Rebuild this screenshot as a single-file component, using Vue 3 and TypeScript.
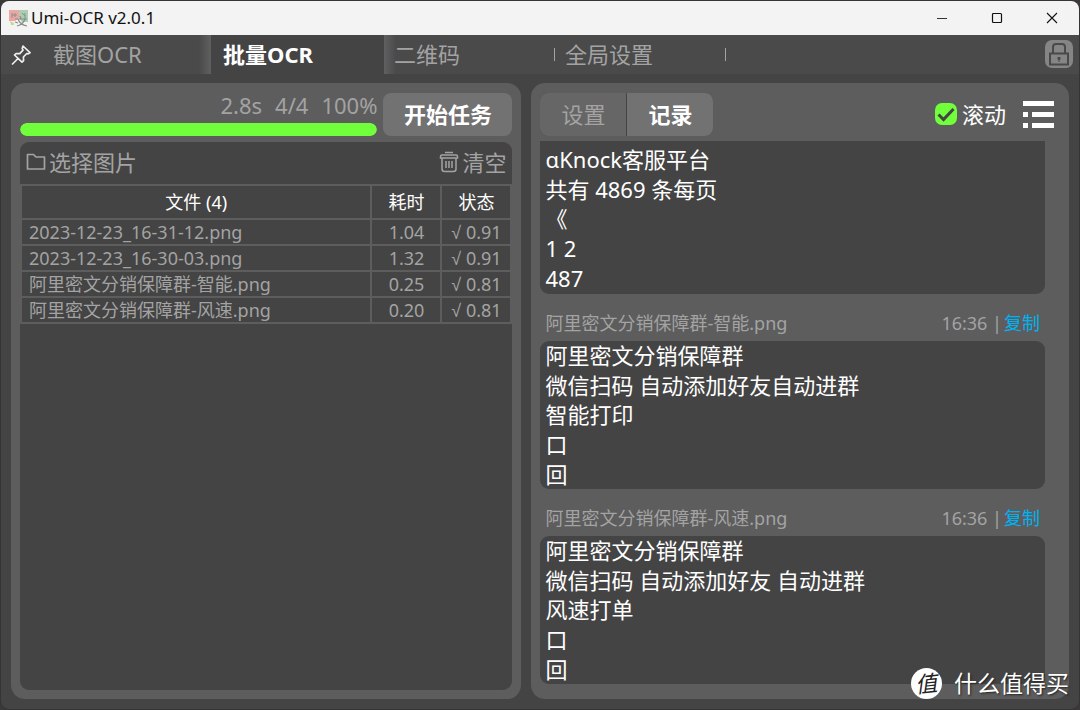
<script setup lang="ts">
import { ref } from 'vue'

interface FileRow { name: string; time: string; score: string }
interface OcrRecord { id: number; name: string; at: string; lines: string[]; cut: boolean }

const files: FileRow[] = [
  { name: '2023-12-23_16-31-12.png', time: '1.04', score: '0.91' },
  { name: '2023-12-23_16-30-03.png', time: '1.32', score: '0.91' },
  { name: '阿里密文分销保障群-智能.png', time: '0.25', score: '0.81' },
  { name: '阿里密文分销保障群-风速.png', time: '0.20', score: '0.81' },
]

const records: OcrRecord[] = [
  { id: 1, name: '', at: '', cut: true, lines: ['αKnock客服平台', '共有 4869 条每页', '《', '1 2', '487'] },
  { id: 2, name: '阿里密文分销保障群-智能.png', at: '16:36', cut: false, lines: ['阿里密文分销保障群', '微信扫码 自动添加好友自动进群', '智能打印', '口', '回'] },
  { id: 3, name: '阿里密文分销保障群-风速.png', at: '16:36', cut: false, lines: ['阿里密文分销保障群', '微信扫码 自动添加好友 自动进群', '风速打单', '口', '回'] },
]

const progress = ref(100)
const autoScroll = ref(true)
</script>

<template>
  <div class="window">
    <header class="titlebar">
      <svg class="logo" viewBox="0 0 20 18" aria-hidden="true">
        <path d="M0 1h10v8l-4 3H0z" fill="#eda6a2" />
        <path d="M10 1h9v12h-6l-3-4z" fill="#a9cfb0" />
        <path d="M1 12l4 2v2H2z" fill="#b9e08f" />
        <path d="M3 4v5M6 4v4M3 6h5M13 4l3 3M16 4v6" stroke="#8d8f8d" stroke-width="1" fill="none" />
        <path d="M6 10h12M11 7l1 3M16 10c-1 3-4 6-8 7M9 10c1 3 4 6 9 7M6 13l3 1" stroke="#8b8c8a" stroke-width="1.2" fill="none" />
      </svg>
      <h1>Umi-OCR v2.0.1</h1>
      <div class="sys">
        <button aria-label="最小化"><svg viewBox="0 0 12 12"><path d="M1 6.5h10" stroke="#333" /></svg></button>
        <button aria-label="最大化"><svg viewBox="0 0 12 12"><rect x="1.5" y="1.5" width="9" height="9" rx="1" fill="none" stroke="#111" stroke-width="1.2" /></svg></button>
        <button aria-label="关闭"><svg viewBox="0 0 12 12"><path d="M1 1l10 10M11 1L1 11" stroke="#111" stroke-width="1.1" /></svg></button>
      </div>
    </header>

    <nav class="tabs">
      <button class="pin" aria-label="置顶">
        <svg viewBox="0 0 20 20"><path d="M12 1l7 6.700-1.800 1.200-1.400-.4-3.400 3.500.2 3.600-1.600 1.600L3.500 10l1.600-1.500 3.700.1 3.200-3.400-.8-1.700zM7 13.500L1.500 19" fill="none" stroke="#eee" stroke-width="1.700" stroke-linejoin="round" stroke-linecap="round" /></svg>
      </button>
      <button class="tab first">截图OCR</button>
      <button class="tab active">批量OCR</button>
      <button class="tab after">二维码</button>
      <button class="tab last">全局设置</button>
      <button class="lock" aria-label="锁定">
        <svg viewBox="0 0 28 28"><path d="M8 13V7q0-3 3-3h6q3 0 3 3v6" fill="none" stroke="#494949" stroke-width="2" /><rect x="5" y="13.500" width="18" height="11" fill="none" stroke="#494949" stroke-width="2" /><path d="M12.500 17h3v2.500l-1 .5v2h-1v-2l-1-.5z" fill="#494949" /></svg>
      </button>
    </nav>

    <main class="content">
      <section class="panel left">
        <div class="task">
          <div class="status">
            <div class="figures"><span>2.8s</span><span>4/4</span><span>{{ progress }}%</span></div>
            <div class="track"><div class="fill" :style="{ width: progress + '%' }"></div></div>
          </div>
          <button class="start">开始任务</button>
        </div>
        <div class="filebox">
          <div class="filebar">
            <button>
              <svg class="folder" viewBox="0 0 20 18"><path d="M1.500 1.500h6l2.500 2.500h8.500v12h-17z" fill="none" stroke="#a3a3a3" stroke-width="1.700" stroke-linejoin="round" /></svg>选择图片
            </button>
            <button>
              <svg class="trash" viewBox="0 0 20 22"><g fill="none" stroke="#a3a3a3" stroke-width="1.500"><path d="M6 1.500h8M1.500 7V5.500q0-1.500 1.500-1.500h14q1.500 0 1.500 1.500V7zM3 7v11q0 2.500 2.500 2.500h9q2.500 0 2.500-2.500V7M7 10v7M10 10v7M13 10v7" /></g></svg>清空
            </button>
          </div>
          <table>
            <thead><tr><th>文件 ({{ files.length }})</th><th class="narrow">耗时</th><th class="narrow">状态</th></tr></thead>
            <tbody>
              <tr v-for="f in files" :key="f.name"><td class="name">{{ f.name }}</td><td>{{ f.time }}</td><td><span class="ok">√</span> {{ f.score }}</td></tr>
            </tbody>
          </table>
        </div>
      </section>

      <section class="panel right">
        <div class="tools">
          <div class="switch"><button>设置</button><button class="on">记录</button></div>
          <label class="scroll"><input v-model="autoScroll" type="checkbox" /><svg viewBox="0 0 22 22" aria-hidden="true"><rect width="22" height="22" rx="7" fill="#70ff3a" /><path v-if="autoScroll" d="M3.500 11.500l5 5L18.500 6" fill="none" stroke="#444" stroke-width="3" /></svg>滚动</label>
          <button class="menu" aria-label="菜单"><svg viewBox="0 0 31 27"><path d="M0 0h31v5H0zM0 11h5v5H0zM9 11h22v5H9zM0 22h5v5H0zM9 22h22v5H9z" fill="#fff" /></svg></button>
        </div>
        <div class="records">
          <article v-for="r in records" :key="r.id">
            <div v-if="!r.cut" class="meta"><span class="source">{{ r.name }}</span><span>{{ r.at }} |</span><a href="#">复制</a></div>
            <div class="lines" :class="{ cut: r.cut }"><p v-for="(line, i) in r.lines" :key="i">{{ line }}</p></div>
          </article>
        </div>
      </section>
    </main>

    <div class="watermark"><span class="badge"><i>值</i></span>什么值得买</div>
  </div>
</template>

<style>
body { margin: 0; background: #3b3839; }
</style>

<style scoped>
* { box-sizing: border-box; }
button { border: 0; padding: 0; background: none; font: inherit; color: inherit; cursor: pointer; }
svg { display: block; flex: none; }
h1, p { margin: 0; }

.window {
  position: relative;
  display: flex;
  flex-direction: column;
  height: 100vh;
  border: 1px solid #353535;
  border-radius: 9px;
  background: #444;
  overflow: hidden;
  color: #a3a3a3;
  font: 400 22px/30px "Noto Sans", "Noto Sans CJK SC", sans-serif;
}

.titlebar { display: flex; align-items: center; height: 34px; flex: none; padding-left: 8px; background: #f3f3f3; color: #111; }
.logo { width: 20px; height: 18px; margin-right: 2px; }
.titlebar h1 { flex: 1; font: 400 17px/24px "Noto Sans", sans-serif; }
.sys { display: flex; }
.sys button { width: 55px; height: 34px; display: grid; place-items: center; }
.sys svg { width: 12px; height: 12px; }

.tabs { display: flex; height: 39px; flex: none; background: #4a4a4a; }
.pin { width: 40px; display: grid; place-items: center; }
.pin svg { width: 20px; height: 20px; }
.tab { position: relative; width: 171px; padding: 0 0 2px 10px; text-align: left; }
.tab.first { width: 170px; padding-left: 12px; background: linear-gradient(to left, #606060, #4a4a4a 12px); }
.tab.active { width: 173px; padding-left: 12px; background: #444; color: #fff; font-weight: 700; }
.tab.after { background: linear-gradient(to right, #606060, #4a4a4a 12px); }
.tab.after::after, .tab.last::after { content: ""; position: absolute; right: 0; top: 13px; width: 1px; height: 13px; background: #a3a3a3; }
.lock { width: 28px; height: 28px; margin: 5px 6px 0 auto; border-radius: 7px; background: #858585; }

.content { display: flex; flex: 1; min-height: 0; gap: 10px; padding: 9px 10px 10px; }
.panel { display: flex; flex-direction: column; min-width: 0; min-height: 0; border-radius: 14px; background: #5d5d5d; }
.left { flex: 510 1 0; padding: 10px 9px 9px; }
.right { flex: 538 1 0; padding: 10px 9px 0; }

.task { display: flex; gap: 6px; height: 43px; flex: none; }
.status { flex: 1; display: flex; flex-direction: column; justify-content: space-between; }
.figures { display: flex; justify-content: flex-end; gap: 13px; line-height: 24px; }
.track { height: 13px; border-radius: 7px; overflow: hidden; }
.fill { height: 100%; border-radius: 7px; background: #70ff3a; }
.start { width: 129px; padding-bottom: 2px; border-radius: 8px; background: #727272; color: #fff; font-weight: 700; }

.filebox { flex: 1; margin-top: 6px; border-radius: 9px; background: #444; overflow: hidden; }
.filebar { display: flex; justify-content: space-between; height: 42px; padding: 0 6px; }
.filebar button { display: flex; align-items: center; gap: 3px; padding-bottom: 2px; }
.folder { width: 20px; height: 18px; }
.trash { width: 20px; height: 22px; }
table { width: 100%; border-spacing: 2px; background: #5d5d5d; table-layout: fixed; font-size: 18px; line-height: 22px; }
th { height: 32px; padding: 0; background: #444; color: #fff; font-weight: 400; }
td { height: 24px; padding: 0; background: #444; text-align: center; }
.narrow { width: 68px; }
td.name { padding-left: 7px; text-align: left; }
.ok { font-family: "Liberation Sans", sans-serif; line-height: 16px; }

.tools { display: flex; align-items: center; height: 43px; flex: none; }
.switch { display: flex; gap: 1px; margin-right: auto; border-radius: 8px; overflow: hidden; background: #444; }
.switch button { width: 86px; height: 43px; padding-bottom: 2px; background: #666; }
.switch .on { background: #727272; color: #fff; font-weight: 700; }
.scroll { position: relative; display: flex; align-items: center; gap: 5px; padding-bottom: 2px; color: #fff; cursor: pointer; }
.scroll input { position: absolute; opacity: 0; width: 22px; height: 22px; margin: 0; }
.scroll svg { width: 22px; height: 22px; }
.menu { margin: 0 6px 0 17px; }
.menu svg { width: 31px; height: 27px; }

.records { flex: 1; min-height: 0; margin: 5px 15px 0 0; overflow: hidden; }
.meta { display: flex; align-items: center; gap: 2px; height: 47px; padding: 11px 5px 0; font-size: 18px; line-height: 24px; }
.source { flex: 1; }
.meta a { color: #00b2f3; text-decoration: none; }
.lines { display: grid; grid-auto-rows: 1fr; align-items: center; min-height: 148px; padding: 0 5px; border-radius: 9px; background: #444; color: #fff; line-height: 29px; }
.lines.cut { min-height: 153px; padding: 4px 5px 1px; border-radius: 0 0 9px 9px; }

.watermark { position: absolute; right: 10px; bottom: 9px; display: flex; align-items: center; gap: 12px; color: #fff; font-size: 23px; line-height: 34px; text-shadow: 1px 1px 2px #222; }
.badge { display: grid; place-items: center; width: 31px; height: 31px; border-radius: 50%; background: #fff; color: #222; text-shadow: none; }
.badge i { transform: rotate(-6deg); font-size: 22px; line-height: 30px; }
</style>
